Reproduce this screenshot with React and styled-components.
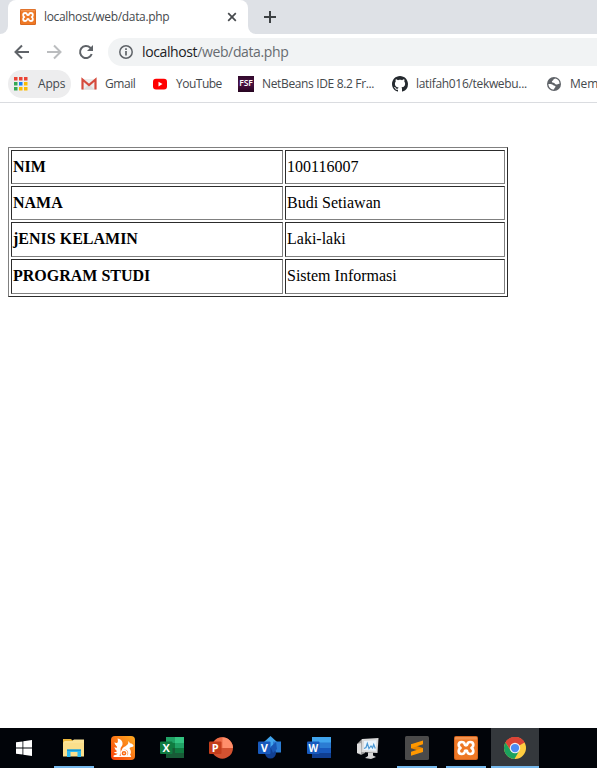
import React from "react";
import styled, { createGlobalStyle } from "styled-components";

const Global = createGlobalStyle`
  * { box-sizing: border-box; }
  body { margin: 0; background: #fff; overflow: hidden; }
`;

const Browser = styled.div`
  height: 768px;
  width: 100%;
  display: flex;
  flex-direction: column;
  overflow: hidden;
  font-family: "Open Sans", "Noto Sans", sans-serif;
`;

const TabStrip = styled.div`
  height: 34px;
  flex: none;
  display: flex;
  background: #dee1e6;
`;
const StripEdge = styled.div`
  width: 8px;
  background: #fff;
  &::before {
    content: "";
    display: block;
    height: 34px;
    background: #dee1e6;
    border-radius: ${(p) => (p.$right ? "0 0 0 8px" : "0 0 8px 0")};
  }
`;
const Tab = styled.div`
  width: 240px;
  padding: 0 11px 0 12px;
  display: flex;
  align-items: center;
  background: #fff;
  border-radius: 8px 8px 0 0;
`;
const TabTitle = styled.span`
  flex: 1;
  margin-left: 8px;
  font-size: 12px;
  line-height: 16px;
  letter-spacing: -0.33px;
  color: #45494d;
  white-space: nowrap;
`;
const NewTab = styled.div`
  display: flex;
  align-items: center;
  padding-left: 8px;
`;

const Toolbar = styled.div`
  height: 36px;
  flex: none;
  display: flex;
  align-items: center;
`;
const NavButtons = styled.div`
  width: 108px;
  padding-left: 14px;
  display: flex;
  gap: 16px;
`;
const AddressBar = styled.div`
  flex: 1;
  height: 28px;
  padding-left: 10px;
  display: flex;
  align-items: center;
  gap: 8px;
  background: #f1f3f4;
  border-radius: 14px 0 0 14px;
`;
const Address = styled.span`
  font-size: 14px;
  line-height: 18px;
  letter-spacing: -0.38px;
  color: #676b70;
  white-space: nowrap;
`;
const Host = styled.span`
  color: #202124;
`;

const Bookmarks = styled.div`
  height: 33px;
  flex: none;
  display: flex;
  padding-left: 8px;
  border-bottom: 1px solid #dadce0;
  overflow: hidden;
`;
const Bookmark = styled.div`
  width: ${(p) => p.$width}px;
  height: 28px;
  flex: none;
  padding-left: ${(p) => p.$pad ?? 10}px;
  display: flex;
  align-items: center;
  gap: 8px;
  border-radius: 14px;
  background: ${(p) => (p.$active ? "#ededee" : "transparent")};
`;
const BookmarkLabel = styled.span`
  font-size: 12px;
  line-height: 16px;
  letter-spacing: ${(p) => p.$spacing}px;
  color: #45494d;
  white-space: nowrap;
`;
const FsfMark = styled.span`
  width: 16px;
  height: 16px;
  background: linear-gradient(#310a2c, #4b1242 50%, #260520);
  color: #fff;
  font: 600 8.5px/13px "Open Sans", sans-serif;
  text-align: center;
`;

const Page = styled.main`
  flex: 1;
  padding: 44px 8px 0;
`;
const DataTable = styled.table`
  width: 500px;
  table-layout: fixed;
  border: 1px solid;
  border-color: #808080 #2c2c2c #2c2c2c #808080;
  border-spacing: 2px;
  font: 16px/18px "Liberation Serif", "Times New Roman", serif;
  color: #000;
`;
const Column = styled.col`
  width: ${(p) => p.$width}px;
`;
const Row = styled.tr`
  height: ${(p) => p.$height}px;
`;
const Cell = styled.td`
  padding: 0 1px ${(p) => p.$bottom}px;
  border: 1px solid;
  border-color: #2c2c2c #808080 #808080 #2c2c2c;
  font-weight: ${(p) => (p.$head ? "bold" : "normal")};
`;

const Taskbar = styled.footer`
  height: 40px;
  flex: none;
  display: flex;
  gap: 1px;
  background: #010409;
`;
const TaskButton = styled.div`
  width: 48px;
  height: 40px;
  flex: none;
  margin-right: ${(p) => (p.$start ? 1 : 0)}px;
  display: grid;
  place-items: center;
  background: ${(p) => (p.$active ? "#34383c" : "transparent")};
  border: solid transparent;
  border-width: 0 ${(p) => (p.$open ? 4 : 0)}px;
  box-shadow: ${(p) => (p.$active || p.$open ? "inset 0 -2px #76b9ed" : "none")};
`;

const Xampp = ({ size }) => (
  <svg width={size} height={size} viewBox="0 0 24 24">
    <rect width="24" height="24" rx="2" fill="#d4651e" />
    <rect x="1" y="1" width="22" height="22" rx="1.500" fill="#ee7825" />
    <path d="M1 1h22v2.500H1z" fill="#f7a56d" opacity=".6" />
    <path
      d="M12 9.300C10.800 9.300 10.700 8.800 10.600 8 10.300 6.600 9.200 6 7.700 6 5.700 6 4.700 7.300 4.700 9c0 1.400.7 2.400 1.800 3-1.100.6-1.800 1.600-1.800 3 0 1.700 1 3 3 3 1.500 0 2.600-.6 2.900-2 .1-.8.2-1.300 1.400-1.300s1.300.5 1.400 1.300c.3 1.400 1.400 2 2.900 2 2 0 3-1.300 3-3 0-1.400-.7-2.400-1.800-3 1.100-.6 1.800-1.600 1.800-3 0-1.700-1-3-3-3-1.500 0-2.600.6-2.900 2-.1.8-.2 1.300-1.400 1.300z"
      fill="none" stroke="#fff" strokeWidth="2.700" strokeLinejoin="round"
    />
  </svg>
);
const CloseIcon = () => (
  <svg width="10" height="10" viewBox="0 0 10 10">
    <path d="M1.200 1.200l7.600 7.600M8.800 1.200L1.200 8.800" stroke="#46494d" strokeWidth="1.700" />
  </svg>
);
const PlusIcon = () => (
  <svg width="12" height="12" viewBox="0 0 12 12">
    <path d="M6 0v12M0 6h12" stroke="#3c4043" strokeWidth="2" />
  </svg>
);
const ArrowIcon = ({ forward }) => (
  <svg width="16" height="16" viewBox="0 0 16 16">
    <path
      d={forward ? "M1 8h13M8 1.500L14.500 8 8 14.500" : "M15 8H2M8 1.500L1.500 8 8 14.500"}
      fill="none" stroke={forward ? "#bbbdbf" : "#5f6368"} strokeWidth="2"
    />
  </svg>
);
const ReloadIcon = () => (
  <svg width="16" height="16" viewBox="0 0 16 16">
    <path d="M13.700 10A6 6 0 1 1 12.300 3.800L14 5.500" fill="none" stroke="#5f6368" strokeWidth="2" />
    <path d="M15 1v6H9z" fill="#5f6368" />
  </svg>
);
const InfoIcon = () => (
  <svg width="16" height="16" viewBox="0 0 16 16">
    <circle cx="8" cy="8" r="6.200" fill="none" stroke="#5f6368" strokeWidth="1.500" />
    <path d="M8 7v4.500M8 4.300v1.600" stroke="#5f6368" strokeWidth="1.700" />
  </svg>
);
const gridColors = ["#ea4335", "#ea4335", "#ea4335", "#34a853", "#1a82f7", "#fbbc05", "#34a853", "#fbbc05", "#fbbc05"];
const AppsIcon = () => (
  <svg width="16" height="16" viewBox="0 0 16 16">
    {gridColors.map((c, i) => (
      <rect key={i} x={(i % 3) * 5} y={1 + Math.floor(i / 3) * 5} width="3.500" height="3.500" fill={c} />
    ))}
  </svg>
);
const GmailIcon = () => (
  <svg width="16" height="16" viewBox="0 0 16 16">
    <path d="M1 3h14v11H1z" fill="#eee" />
    <path d="M2.500 13.500L8 8l5.500 5.500z" fill="#dedede" />
    <path d="M1.500 13.500V3.500L8 9l6.500-5.500v10" fill="none" stroke="#d54b3d" strokeWidth="2.200" />
  </svg>
);
const YouTubeIcon = () => (
  <svg width="16" height="16" viewBox="0 0 16 16">
    <rect x="1" y="2.700" width="14" height="10.800" rx="3" fill="#f00" />
    <path d="M6.500 5.700L10.500 8.100 6.500 10.500z" fill="#fff" />
  </svg>
);
const GithubIcon = () => (
  <svg width="16" height="16" viewBox="0 0 16 16" fill="#24292e">
    <path d="M8 0C3.580 0 0 3.580 0 8c0 3.540 2.290 6.530 5.470 7.590.4.070.55-.17.55-.38 0-.19-.01-.82-.01-1.490-2.010.37-2.530-.49-2.690-.94-.09-.23-.48-.94-.82-1.130-.28-.15-.68-.52-.01-.53.63-.01 1.080.58 1.230.82.72 1.210 1.870.87 2.330.66.07-.52.28-.87.51-1.070-1.780-.2-3.640-.89-3.640-3.950 0-.87.31-1.590.82-2.150-.08-.2-.36-1.020.08-2.120 0 0 .67-.21 2.200.82.64-.18 1.320-.27 2-.27s1.360.09 2 .27c1.530-1.040 2.200-.82 2.200-.82.44 1.100.16 1.920.08 2.120.51.56.82 1.270.82 2.150 0 3.070-1.870 3.750-3.650 3.950.29.25.54.73.54 1.480 0 1.070-.01 1.930-.01 2.200 0 .21.15.46.55.38A8.010 8.010 0 0 0 16 8c0-4.420-3.580-8-8-8z" />
  </svg>
);
const GlobeIcon = () => (
  <svg width="16" height="16" viewBox="0 0 16 16">
    <circle cx="8" cy="8" r="7" fill="#5f6368" />
    <path d="M9.500 2.500C7 3 7.800 4 6.500 4.700 5.300 5.300 6 6.700 7.300 6.800c1.700.1 1.500 1.700 3 1.700 1.300 0 1.500-1 3.300-.8C13.500 5 12 3 9.500 2.500z" fill="#fff" />
    <path d="M2.400 8c1.600-.3 3.500 0 4.600.9.900.8 2.500.5 2.500 1.800 0 1-1.300 1-1.500 2.900C4.900 13.600 2.500 11.300 2.400 8z" fill="#fff" />
  </svg>
);

const WindowsIcon = () => (
  <svg width="16" height="16" viewBox="0 0 16 16" fill="#fff">
    <path d="M0 2.300L6.500 1.400v6.200H0zM7.300 1.300L16 0v7.600H7.300zM0 8.400h6.500v6.200L0 13.700zM7.300 8.400H16V16l-8.700-1.300z" />
  </svg>
);
const FolderIcon = () => (
  <svg width="24" height="24" viewBox="0 0 24 24">
    <path d="M1 3h8l1.500 1.500H22V20H1z" fill="#edb83d" />
    <path d="M2.500 5H10l2-1.500h10V20H1V7z" fill="#fce497" />
    <path d="M1 7h21v13.500H1z" fill="#fbdf8b" />
    <path d="M5 13.500h14V21h-3.500v-5h-7v5H5z" fill="#2fb9ef" />
    <path d="M5 13.500h14V15H5z" fill="#1598d5" />
  </svg>
);
const SquirrelIcon = () => (
  <svg width="24" height="24" viewBox="0 0 24 24">
    <defs>
      <linearGradient id="uc" x1="0" y1="1" x2="1" y2="0">
        <stop offset="0" stopColor="#f83c09" />
        <stop offset=".5" stopColor="#fb7616" />
        <stop offset="1" stopColor="#ffad22" />
      </linearGradient>
    </defs>
    <rect width="24" height="24" rx="4" fill="url(#uc)" />
    <path d="M6.500 2.500C10 3 12 5.500 11.500 8.500 11.200 10.500 9.500 11 9.500 13c0 1.500.3 2.500 0 4L8 21H3.500C2 21 2 19.500 3.200 19.200 4.500 19 6 18.500 6.500 17.500 5 17.500 3.500 17 3 16c1.500.2 2.500 0 3-1C4.500 14 3.500 12.500 3.500 11c1 .8 2.200 1 2.500.2.300-1.200-2.500-2.200-2.500-5 .8.700 2 1 2.800.6C7.200 6 7 4 6.500 2.500z" fill="#fff" />
    <path d="M17.500 5l1.500 2.200c2 .3 3.500 1.300 3.500 2.600 0 1-1.200 1.400-2.600 1.500-1 .1-1.500.6-1.200 1.500 1.600 2 1.600 4.500.3 6.200l1.300 1.500H14c3-.5 4-3 2.500-5.500-1.500-2-4.500-1.500-6 .5.200-3 1.800-4.500 4-5.300L17 8z" fill="#fff" />
    <circle cx="13" cy="17.300" r="3" fill="none" stroke="#fff" strokeWidth="1.300" />
    <circle cx="13" cy="17.300" r=".8" fill="#fff" />
    <path d="M4 20.300h16" stroke="#fff" strokeWidth="1.300" />
  </svg>
);
const OfficeBadge = styled.svg`
  font: bold 11px "Open Sans", sans-serif;
  fill: #fff;
`;
const ExcelIcon = () => (
  <OfficeBadge width="24" height="24" viewBox="0 0 24 24">
    <path d="M6 1h9v7H6z" fill="#21a366" /><path d="M15 1h9v7h-9z" fill="#33c481" />
    <path d="M6 7h9v5H6z" fill="#107c41" /><path d="M15 7h9v5h-9z" fill="#21a366" />
    <path d="M6 12h9v10H6z" fill="#185c37" /><path d="M15 12h9v5h-9z" fill="#107c41" /><path d="M14 17h10v5H14z" fill="#185c37" />
    <rect y="5.500" width="12.500" height="12.500" rx="1" fill="#107c41" />
    <text x="6.250" y="15.800" textAnchor="middle">X</text>
  </OfficeBadge>
);
const PowerPointIcon = () => (
  <OfficeBadge width="24" height="24" viewBox="0 0 24 24">
    <circle cx="13.300" cy="12" r="10.700" fill="#d35230" />
    <path d="M13.300 1.300A10.700 10.700 0 0 0 2.600 12h10.700z" fill="#ed6c47" />
    <path d="M13.300 1.300V12H24A10.700 10.700 0 0 0 13.300 1.300z" fill="#ff8f6b" />
    <rect y="5.500" width="12.500" height="12.500" rx="1" fill="#c43e1c" />
    <text x="6.250" y="15.800" textAnchor="middle">P</text>
  </OfficeBadge>
);
const VisioIcon = () => (
  <OfficeBadge width="24" height="24" viewBox="0 0 24 24">
    <path d="M12.500 0L19 6 12.500 13 6 6z" fill="#41a5ee" />
    <path d="M15 5.500h8v11h-8z" fill="#2b7cd3" />
    <circle cx="12.500" cy="17" r="5.500" fill="#103f91" />
    <path d="M12.500 11l5.500-5 1 7-4 4z" fill="#1957b4" />
    <rect y="5.500" width="12.500" height="12.500" rx="1" fill="#185abd" />
    <text x="6.250" y="15.800" textAnchor="middle">V</text>
  </OfficeBadge>
);
const WordIcon = () => (
  <OfficeBadge width="24" height="24" viewBox="0 0 24 24">
    <path d="M5 1h19v6H5z" fill="#41a5ee" /><path d="M5 6.500h19V12H5z" fill="#2b7cd3" />
    <path d="M5 12h19v5H5z" fill="#185abd" /><path d="M5 17h19v5H5z" fill="#103f91" />
    <rect y="5.500" width="12.500" height="12.500" rx="1" fill="#185abd" />
    <text x="6.250" y="15.500" textAnchor="middle" fontSize="10">W</text>
  </OfficeBadge>
);
const MonitorIcon = () => (
  <svg width="24" height="24" viewBox="0 0 24 24">
    <path d="M1 8l5-5 3 1v13l-4 2-4-2z" fill="#9d9d9d" />
    <path d="M1 8l4-1v11l-4-1z" fill="#dedede" />
    <path d="M6 3l16.500-1L21.500 17 5.500 16z" fill="#d9d9d9" />
    <path d="M8 5l12.500-.7-.8 10.400L7.500 14z" fill="#eaf4fc" />
    <path d="M8 12.500l2-1 1.300-4 1.700 5 2-2.500 1.500 2 1.200-3.500 1.600 4" fill="none" stroke="#4a98d4" strokeWidth="1.200" />
    <path d="M12 16.500h5v3l3 1.500-5 2-6-1 3-2z" fill="#d5d5d5" />
  </svg>
);
const SublimeIcon = () => (
  <svg width="24" height="24" viewBox="0 0 24 24">
    <rect width="24" height="24" rx="1.500" fill="#4a4a4a" />
    <path d="M6 8.200v4l12 3.800v-4z" fill="#e88600" />
    <path d="M18 4.500v3.800L6 12.200V8.200zM18 12v4L6 19.700v-4z" fill="#ff9800" />
  </svg>
);
const ChromeIcon = () => (
  <svg width="22" height="22" viewBox="0 0 24 24">
    <circle cx="12" cy="12" r="12" fill="#ffcd40" />
    <path d="M12 12L1.600 6A12 12 0 0 1 22.400 6z" fill="#db4437" />
    <path d="M12 6.500h10.700A12 12 0 0 0 1.600 6l5.600 8.800z" fill="#db4437" />
    <path d="M1.600 6A12 12 0 0 0 11.400 24l5.400-9.200L12 17.500l-4.800-2.700z" fill="#1ba15d" />
    <circle cx="12" cy="12" r="5.700" fill="#f1f1f1" />
    <circle cx="12" cy="12" r="4.500" fill="#4c8bf5" />
  </svg>
);

const records = [
  { name: "NIM", value: "100116007", height: 34, bottom: 0 },
  { name: "NAMA", value: "Budi Setiawan", height: 34, bottom: 0 },
  { name: "jENIS KELAMIN", value: "Laki-laki", height: 35, bottom: 1 },
  { name: "PROGRAM STUDI", value: "Sistem Informasi", height: 35, bottom: 1 },
];

const bookmarks = [
  { label: "Apps", icon: <AppsIcon />, width: 63, pad: 6, spacing: -0.2, active: true },
  { label: "Gmail", icon: <GmailIcon />, width: 71, spacing: -0.45 },
  { label: "YouTube", icon: <YouTubeIcon />, width: 86, spacing: -0.5 },
  { label: "NetBeans IDE 8.2 Fr...", icon: <FsfMark>FSF</FsfMark>, width: 154, spacing: -0.35 },
  { label: "latifah016/tekwebu...", icon: <GithubIcon />, width: 154, spacing: -0.32 },
  { label: "Mem", icon: <GlobeIcon />, width: 80, spacing: -0.2 },
];

const tasks = [
  { icon: <WindowsIcon />, start: true },
  { icon: <FolderIcon />, open: true },
  { icon: <SquirrelIcon /> },
  { icon: <ExcelIcon /> },
  { icon: <PowerPointIcon /> },
  { icon: <VisioIcon /> },
  { icon: <WordIcon /> },
  { icon: <MonitorIcon /> },
  { icon: <SublimeIcon />, open: true },
  { icon: <Xampp size={24} />, open: true },
  { icon: <ChromeIcon />, active: true },
];

export default function App() {
  return (
    <Browser>
      <Global />
      <TabStrip>
        <StripEdge />
        <Tab>
          <Xampp size={16} />
          <TabTitle>localhost/web/data.php</TabTitle>
          <CloseIcon />
        </Tab>
        <StripEdge $right />
        <NewTab><PlusIcon /></NewTab>
      </TabStrip>
      <Toolbar>
        <NavButtons>
          <ArrowIcon />
          <ArrowIcon forward />
          <ReloadIcon />
        </NavButtons>
        <AddressBar>
          <InfoIcon />
          <Address><Host>localhost</Host>/web/data.php</Address>
        </AddressBar>
      </Toolbar>
      <Bookmarks>
        {bookmarks.map((b) => (
          <Bookmark key={b.label} $width={b.width} $pad={b.pad} $active={b.active}>
            {b.icon}
            <BookmarkLabel $spacing={b.spacing}>{b.label}</BookmarkLabel>
          </Bookmark>
        ))}
      </Bookmarks>
      <Page>
        <DataTable>
          <colgroup>
            <Column $width={272} />
            <Column $width={220} />
          </colgroup>
          <tbody>
            {records.map((r) => (
              <Row key={r.name} $height={r.height}>
                <Cell $head $bottom={r.bottom}>{r.name}</Cell>
                <Cell $bottom={r.bottom}>{r.value}</Cell>
              </Row>
            ))}
          </tbody>
        </DataTable>
      </Page>
      <Taskbar>
        {tasks.map((t, i) => (
          <TaskButton key={i} $start={t.start} $open={t.open} $active={t.active}>{t.icon}</TaskButton>
        ))}
      </Taskbar>
    </Browser>
  );
}
